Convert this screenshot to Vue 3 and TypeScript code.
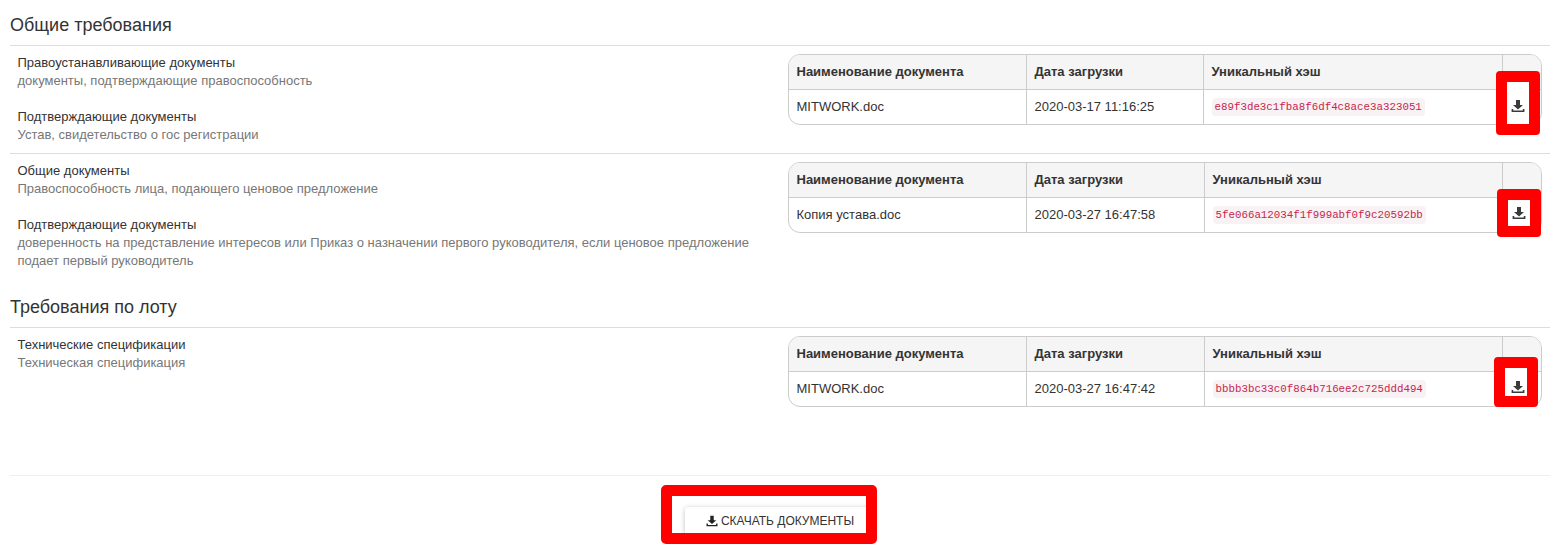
<script setup lang="ts">
interface Doc { name: string; date: string; hash: string }
interface Item { title: string; sub: string }
interface Row { items: Item[]; doc: Doc; hashCol: string }
interface Section { title: string; rows: Row[] }

const sections: Section[] = [
  {
    title: 'Общие требования',
    rows: [
      {
        items: [
          { title: 'Правоустанавливающие документы', sub: 'документы, подтверждающие правоспособность' },
          { title: 'Подтверждающие документы', sub: 'Устав, свидетельство о гос регистрации' },
        ],
        doc: { name: 'MITWORK.doc', date: '2020-03-17 11:16:25', hash: 'e89f3de3c1fba8f6df4c8ace3a323051' },
        hashCol: 'a',
      },
      {
        items: [
          { title: 'Общие документы', sub: 'Правоспособность лица, подающего ценовое предложение' },
          { title: 'Подтверждающие документы', sub: 'доверенность на представление интересов или Приказ о назначении первого руководителя, если ценовое предложение подает первый руководитель' },
        ],
        doc: { name: 'Копия устава.doc', date: '2020-03-27 16:47:58', hash: '5fe066a12034f1f999abf0f9c20592bb' },
        hashCol: 'b',
      },
    ],
  },
  {
    title: 'Требования по лоту',
    rows: [
      {
        items: [{ title: 'Технические спецификации', sub: 'Техническая спецификация' }],
        doc: { name: 'MITWORK.doc', date: '2020-03-27 16:47:42', hash: 'bbbb3bc33c0f864b716ee2c725ddd494' },
        hashCol: 'b',
      },
    ],
  },
]
</script>

<template>
  <div class="page">
    <section v-for="s in sections" :key="s.title" class="section">
      <h2 class="heading">{{ s.title }}</h2>
      <div v-for="(r, i) in s.rows" :key="i" class="row">
        <div class="left">
          <div v-for="it in r.items" :key="it.title" class="item">
            <div class="item-title">{{ it.title }}</div>
            <div class="item-sub">{{ it.sub }}</div>
          </div>
        </div>
        <div class="right">
          <div class="table" :class="'cols-' + r.hashCol">
            <div class="cell head">Наименование документа</div>
            <div class="cell head">Дата загрузки</div>
            <div class="cell head">Уникальный хэш</div>
            <div class="cell head last"></div>
            <div class="cell body">{{ r.doc.name }}</div>
            <div class="cell body">{{ r.doc.date }}</div>
            <div class="cell body"><code class="hash">{{ r.doc.hash }}</code></div>
            <div class="cell body last"></div>
          </div>
          <div class="mark">
            <svg class="dl" viewBox="0 0 14 14" aria-hidden="true">
              <path d="M5 1h4v5h3L7 10.6 2 6h3z" fill="#3a3a3a" />
              <path d="M.6 10v3h12.8v-3h-1.6v1.6H2.2V10z" fill="#3a3a3a" />
            </svg>
          </div>
        </div>
      </div>
    </section>
    <footer class="footer">
      <div class="btn-mark">
        <button class="btn" type="button">
          <svg class="dl-btn" viewBox="0 0 14 14" aria-hidden="true">
            <path d="M5 1h4v5h3L7 10.6 2 6h3z" fill="#222" />
            <path d="M.6 10v3h12.8v-3h-1.6v1.6H2.2V10z" fill="#222" />
          </svg>
          <span>Скачать документы</span>
        </button>
      </div>
    </footer>
  </div>
</template>

<style>
html, body { margin: 0; background: #fff; }
</style>

<style scoped>
.page {
  width: 1540px;
  margin-left: 10px;
  height: 550px;
  overflow: hidden;
  font-family: "Liberation Sans", Arial, sans-serif;
  font-size: 13px;
  color: #333;
  line-height: 18px;
}
.section:first-child { padding-top: 15px; }
.heading {
  margin: 0;
  font-size: 18px;
  font-weight: 400;
  line-height: 21px;
  height: 30px;
  color: #333;
  border-bottom: 1px solid #ddd;
}
.section + .section .heading {
  height: 21px;
  padding-bottom: 9px;
}
.section + .section { margin-top: 19px; }
.row {
  display: flex;
  padding-top: 8px;
  padding-bottom: 8px;
  min-height: 91px;
  border-bottom: 1px solid #ddd;
}
.section .row:last-child { border-bottom: 0; }
.left {
  width: 770px;
  box-sizing: border-box;
  padding: 0 8px 0 7.5px;
}
.item + .item { margin-top: 18px; }
.item-title { color: #333; }
.item-sub { color: #777; }
.right {
  width: 770px;
  box-sizing: border-box;
  padding: 0 8px;
  position: relative;
}
.table {
  display: grid;
  grid-template-rows: 35px 34px;
  border: 1px solid #ccc;
  border-radius: 12px;
  overflow: hidden;
  width: 754px;
  box-sizing: border-box;
}
.cols-a { grid-template-columns: 238px 177px 299px 38px; }
.cols-b { grid-template-columns: 238px 178px 298px 38px; }
.cell {
  display: flex;
  align-items: center;
  padding: 0 7.5px;
  border-right: 1px solid #ccc;
  white-space: nowrap;
  min-width: 0;
}
.cell.last { border-right: 0; }
.body { padding-bottom: 1px; }
.head {
  background: #f5f5f5;
  font-weight: 700;
  border-bottom: 1px solid #ccc;
}
.hash {
  font-family: "Liberation Mono", "DejaVu Sans Mono", monospace;
  font-size: 10.8px;
  line-height: 16px;
  color: #c7254e;
  background: #f9f2f4;
  border-radius: 4px;
  padding: 1px 3px;
}
.mark {
  position: absolute;
  left: 716px;
  top: 17px;
  width: 22px;
  height: 42px;
  border: 11px solid #f00;
  border-radius: 4px;
  background: #fff;
  display: flex;
  justify-content: center;
  align-items: flex-end;
}
.section:nth-child(1) .row:nth-child(3) .mark { left: 717px; top: 27px; height: 26px; }
.section:nth-child(2) .mark { left: 714px; top: 21px; height: 28px; }
.dl {
  width: 14px;
  height: 14px;
  margin-bottom: 11px;
}
.section:nth-child(1) .row:nth-child(3) .dl { margin-bottom: 6px; }
.section:nth-child(2) .dl { margin-bottom: 2px; margin-left: 4px; }
.footer {
  position: absolute;
  left: 10px;
  top: 475px;
  width: 1540px;
  border-top: 1px solid #eee;
}
.btn-mark {
  position: absolute;
  left: 651px;
  top: 9px;
  width: 194px;
  height: 37px;
  border: 11px solid #f00;
  border-radius: 5px;
  overflow: hidden;
  background: #fff;
}
.btn {
  position: absolute;
  left: 13px;
  top: 11px;
  width: 190px;
  height: 28px;
  border: 0;
  background: #fff;
  border-radius: 3px;
  box-shadow: 0 1px 5px rgba(0, 0, 0, .25);
  font-family: inherit;
  font-size: 12px;
  text-transform: uppercase;
  color: #333;
  display: flex;
  align-items: center;
  justify-content: center;
  gap: 3px;
  padding: 0;
}
.dl-btn { width: 12px; height: 12px; }
</style>
